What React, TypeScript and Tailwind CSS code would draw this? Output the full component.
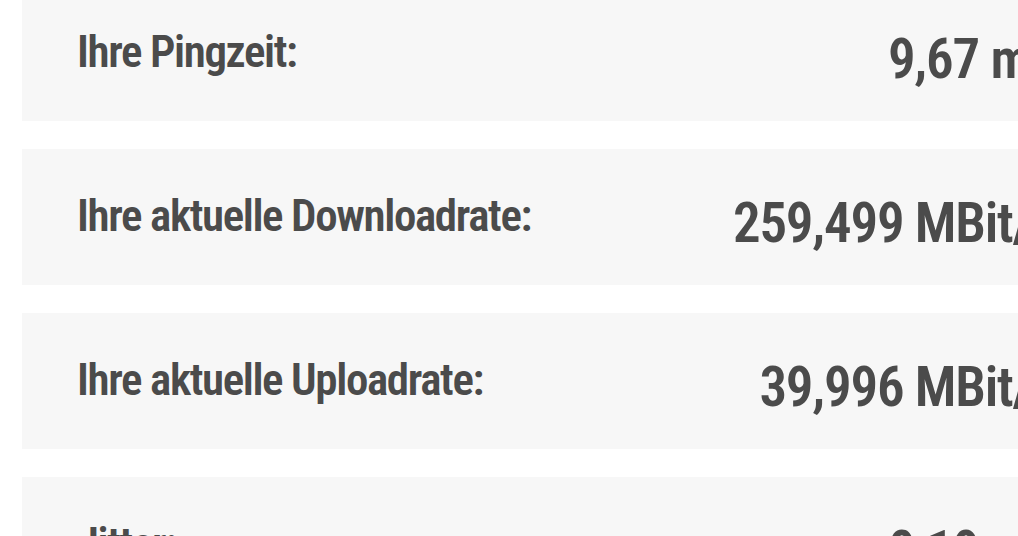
const rows = [
  { label: 'Ihre Pingzeit:', value: '9,67 ms' },
  { label: 'Ihre aktuelle Downloadrate:', value: '259,499 MBit/s' },
  { label: 'Ihre aktuelle Uploadrate:', value: '39,996 MBit/s' },
  { label: 'Jitter:', value: '0,19 ms' },
];

export default function App() {
  return (
    <div className="h-[536px] w-[1018px] overflow-hidden bg-white">
      <div
        className="-mt-[15px] ml-[22px] flex w-[1100px] flex-col gap-[28px] text-[#4b4b4b]"
        style={{ fontFamily: '"Roboto Condensed", "Liberation Sans", sans-serif' }}
      >
        {rows.map((r) => (
          <div key={r.label} className="flex h-[136px] items-center justify-between bg-[#f7f7f7] pl-[55px] pr-[68px]">
            <span className="-mt-[3px] text-[45px] font-semibold leading-none tracking-[-1.4px]">{r.label}</span>
            <span className="mt-[12px] text-[55px] font-semibold leading-none tracking-[-1.2px]">{r.value}</span>
          </div>
        ))}
      </div>
    </div>
  );
}
